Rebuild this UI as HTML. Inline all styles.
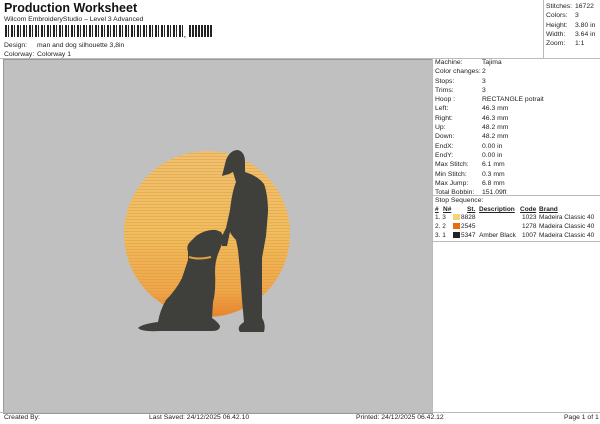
<!DOCTYPE html><html><head><style>
body{margin:0;width:600px;height:424px;background:#fff;font-family:"Liberation Sans",sans-serif;color:#222;position:relative;overflow:hidden}
.a{position:absolute;white-space:nowrap;font-size:6.8px}
.g{position:absolute;left:3px;top:59px;width:428px;height:353px;background:#c0c0c0;border:1px solid #999}
.rt{table-layout:fixed}
.rt td{font-size:6.8px;padding:0;line-height:9.3px;white-space:nowrap;overflow:visible}
.s{font-size:6.5px}
</style></head><body>
<div class="a" style="left:4px;top:1px;font-size:12.5px;font-weight:bold;color:#111">Production Worksheet</div>
<div class="a" style="left:4px;top:16px">Wilcom EmbroideryStudio – Level 3 Advanced</div>
<div class="a" style="left:5px;top:25px;width:178px;height:12px;background:repeating-linear-gradient(90deg,#222 0 2px,#fff 2px 3px,#222 3px 4px,#fff 4px 6px)"></div>
<div class="a" style="left:184px;top:33px;font-size:6px;font-weight:bold">,</div>
<div class="a" style="left:189px;top:25px;width:24px;height:12px;background:repeating-linear-gradient(90deg,#222 0 2px,#fff 2px 3px)"></div>
<div class="a" style="left:4px;top:42px">Design:</div><div class="a" style="left:37px;top:42px">man and dog silhouette 3,8in</div>
<div class="a" style="left:4px;top:51px">Colorway:</div><div class="a" style="left:37px;top:51px">Colorway 1</div>
<div style="position:absolute;left:0;top:58px;width:600px;border-top:1px solid #bbb"></div>
<div style="position:absolute;left:543px;top:0;width:56px;height:58px;border-left:1px solid #bbb"></div>
<table class="rt" style="position:absolute;left:546px;top:2px;border-collapse:collapse;width:52px"><tr><td style="width:29px">Stitches:</td><td>16722</td></tr><tr><td>Colors:</td><td>3</td></tr><tr><td>Height:</td><td>3.80 in</td></tr><tr><td>Width:</td><td>3.64 in</td></tr><tr><td>Zoom:</td><td>1:1</td></tr></table>
<div class="g"></div>
<svg style="position:absolute;left:0;top:0" width="600" height="424">
<defs><linearGradient id="s" x1="0" y1="0" x2="0" y2="1"><stop offset="0" stop-color="#efc070"/><stop offset=".5" stop-color="#efbe5e"/><stop offset=".85" stop-color="#eea64a"/><stop offset="1" stop-color="#e8822a"/></linearGradient>
<pattern id="p" width="6" height="3" patternUnits="userSpaceOnUse"><rect width="6" height="1" fill="#e09038" opacity=".4"/></pattern></defs>
<circle cx="207" cy="234" r="83" fill="url(#s)"/><circle cx="207" cy="234" r="83" fill="url(#p)"/>
<g fill="#3f403b">
<path d="M226 160 Q230 150 238 150 Q245 152 245 162 L245 172 Q258 176 264 184 Q268 195 268 212 L266 236 L262 258 L262 290 L262 318 Q266 324 264 332 L240 332 Q236 327 244 322 L242 300 L240 270 L238 250 L236 240 Q232 236 230 232 L227 246 L222 246 L222 236 L226 228 L230 210 Q232 192 236 182 L233 172 L229 174 L222 176 Z"/>
<path d="M196 236 Q206 229 216 230 L221 232 Q224 236 222 244 L218 254 Q215 262 215 272 Q216 292 213 302 L212 318 Q218 322 220 326 Q220 331 212 331 L160 331 Q142 332 138 328 Q142 324 158 322 Q160 310 166 300 Q176 290 182 278 L188 260 L188 252 Q186 246 190 242 Z"/>
</g>
<path d="M189 257 Q198 260 211 257" stroke="#e0a040" stroke-width="2" fill="none"/>
</svg>
<div style="position:absolute;left:432px;top:59px;width:166px;height:353px;border-left:1px solid #bbb"></div>
<table class="rt" style="position:absolute;left:435px;top:58px;border-collapse:collapse;width:160px">
<col style="width:47px"><col>
<tr><td>Machine:</td><td>Tajima</td></tr><tr><td>Color changes:</td><td>2</td></tr><tr><td>Stops:</td><td>3</td></tr><tr><td>Trims:</td><td>3</td></tr><tr><td>Hoop :</td><td>RECTANGLE potrait</td></tr><tr><td>Left:</td><td>46.3 mm</td></tr><tr><td>Right:</td><td>46.3 mm</td></tr><tr><td>Up:</td><td>48.2 mm</td></tr><tr><td>Down:</td><td>48.2 mm</td></tr><tr><td>EndX:</td><td>0.00 in</td></tr><tr><td>EndY:</td><td>0.00 in</td></tr><tr><td>Max Stitch:</td><td>6.1 mm</td></tr><tr><td>Min Stitch:</td><td>0.3 mm</td></tr><tr><td>Max Jump:</td><td>6.8 mm</td></tr><tr><td>Total Bobbin:</td><td>151.09ft</td></tr></table>
<div style="position:absolute;left:432px;top:195px;width:168px;border-top:1px solid #bbb"></div>
<div class="a" style="left:435px;top:197px">Stop Sequence:</div>
<div class="a s" style="left:435px;top:206px;font-weight:bold;text-decoration:underline">#</div>
<div class="a s" style="left:443px;top:206px;font-weight:bold;text-decoration:underline">N#</div>
<div class="a s" style="left:467px;top:206px;font-weight:bold;text-decoration:underline">St.</div>
<div class="a s" style="left:479px;top:206px;font-weight:bold;text-decoration:underline">Description</div>
<div class="a s" style="left:520px;top:206px;font-weight:bold;text-decoration:underline">Code</div>
<div class="a s" style="left:539px;top:206px;font-weight:bold;text-decoration:underline">Brand</div>
<div class="a s" style="left:435px;top:214px">1. 3</div><div class="a" style="left:453px;top:214px;width:7px;height:6px;background:#f3d67a"></div><div class="a s" style="left:461px;top:214px">8828</div><div class="a s" style="left:522px;top:214px">1023</div><div class="a s" style="left:539px;top:214px">Madeira Classic 40</div>
<div class="a s" style="left:435px;top:223px">2. 2</div><div class="a" style="left:453px;top:223px;width:7px;height:6px;background:#ea6a10"></div><div class="a s" style="left:461px;top:223px">2545</div><div class="a s" style="left:522px;top:223px">1278</div><div class="a s" style="left:539px;top:223px">Madeira Classic 40</div>
<div class="a s" style="left:435px;top:232px">3. 1</div><div class="a" style="left:453px;top:232px;width:7px;height:6px;background:#222"></div><div class="a s" style="left:461px;top:232px">5347 &nbsp;Amber Black</div><div class="a s" style="left:522px;top:232px">1007</div><div class="a s" style="left:539px;top:232px">Madeira Classic 40</div>
<div style="position:absolute;left:432px;top:241px;width:168px;border-top:1px solid #bbb"></div>
<div style="position:absolute;left:0;top:412px;width:600px;border-top:1px solid #bbb"></div>
<div class="a" style="left:4px;top:414px">Created By:</div>
<div class="a" style="left:149px;top:414px">Last Saved: 24/12/2025 06.42.10</div>
<div class="a" style="left:356px;top:414px">Printed: 24/12/2025 06.42.12</div>
<div class="a" style="left:564px;top:414px">Page 1 of 1</div>
</body></html>
